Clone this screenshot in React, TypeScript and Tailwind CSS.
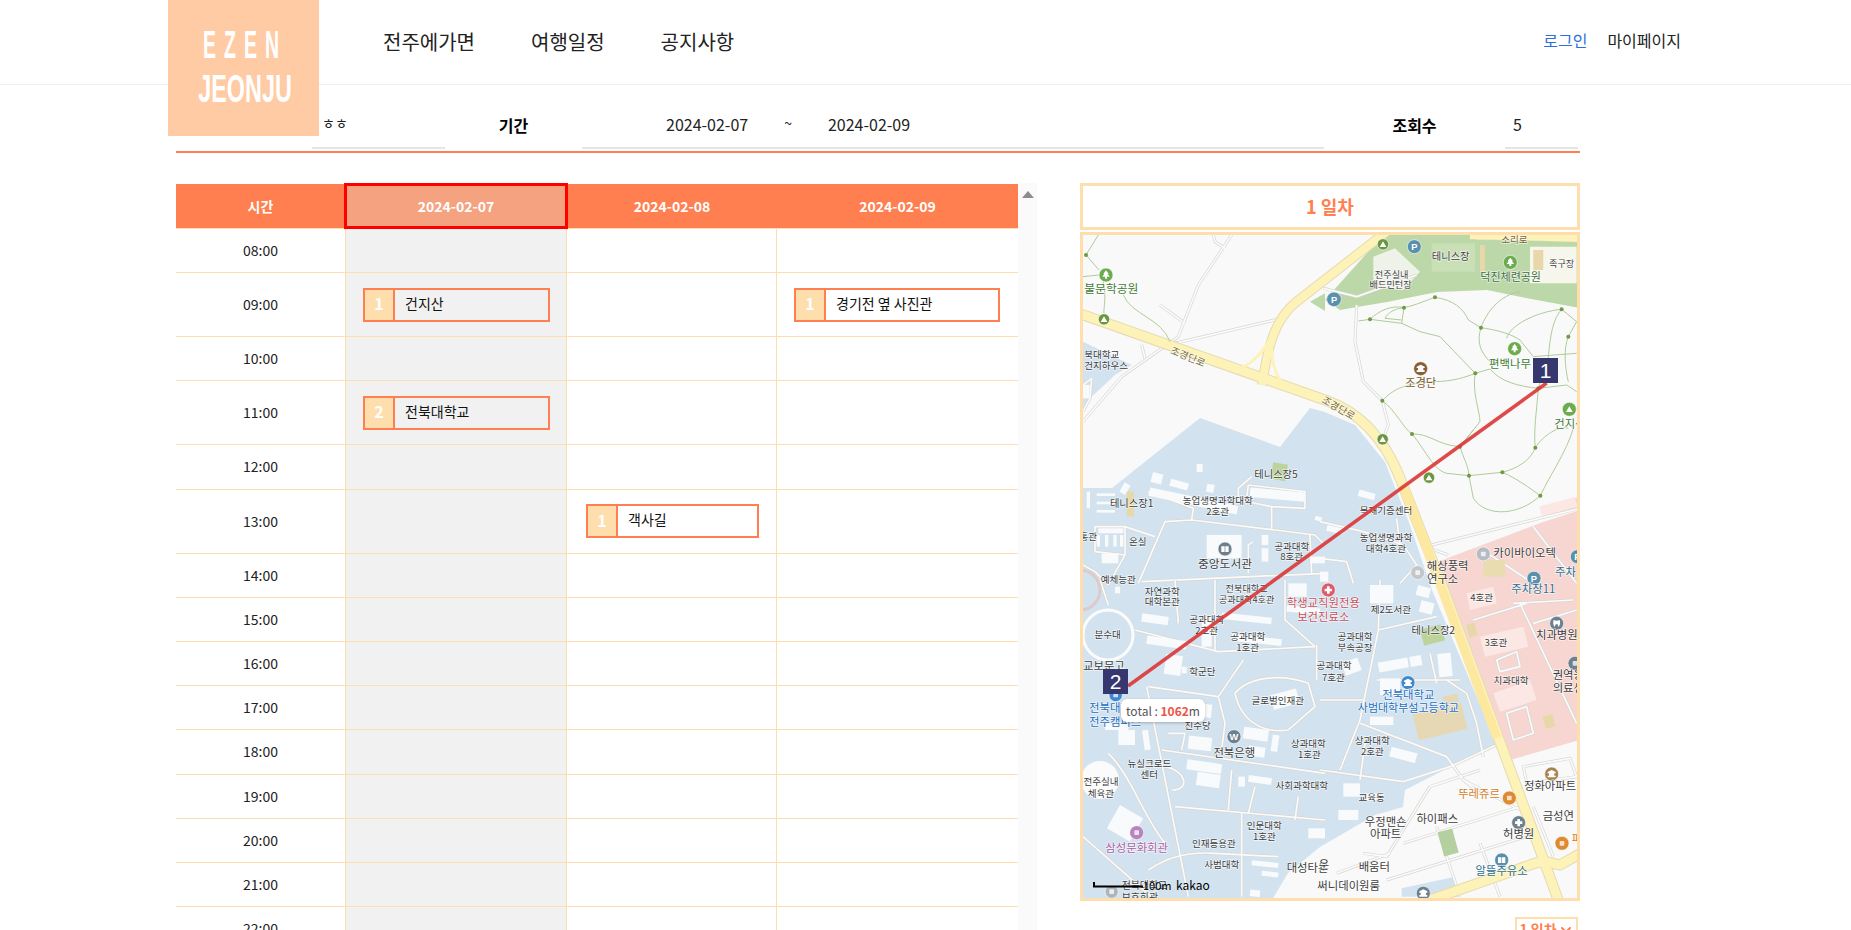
import { ChevronDown } from 'lucide-react'

type Rect = [number, number, number, number, number?, string?]
type Label = [number, number, string, number?, string?, 's' | 'e'?, number?]
type Pin = [number, number, number, string, string?]
type Poly = [string, string]

type Quad = {
  ox: number
  oy: number
  polys?: Poly[]
  roads?: string[]
  rects?: Rect[]
  trails?: string[]
  nodes?: [number, number][]
  labels?: Label[]
  pins?: Pin[]
}

const TEXT = '#3d3d3d'
const GREEN = '#3f7a35'
const BLUE = '#1f6fc0'
const TEAL = '#2f6f8f'
const ORANGE = '#d67d1f'
const RED = '#c94f5c'

// coordinates of each map quarter are in 3x units from its corner
const quads: Quad[] = [
  {
    ox: 1075,
    oy: 225,
    polys: [
      ['24,350 170,420 120,450 45,520 24,560', '#d2e3ef'],
      ['705,230 750,205 750,258', '#bcd7a8'],
    ],
    roads: [
      'M24 590 L140 455 L310 335 L370 180 L470 30',
      'M255 240 L330 295',
      'M300 355 L620 280',
      'M200 360 L210 400',
      'M24 1020 L60 1040 L100 1080',
      'M100 1080 L150 990 L150 905 L60 905 L60 980 L150 990',
      'M150 905 L240 935',
      'M190 1075 L270 890 L350 885 L600 915 L720 930 L750 960',
      'M350 885 L355 850 L220 800',
      'M490 825 L490 790 L530 755',
      'M490 825 L590 845 L690 850 L690 800 L520 780 L515 820',
      'M590 845 L590 915',
      'M200 1070 L750 1045',
      'M520 1045 L520 960 L535 950',
      'M710 1045 L705 930',
      'M415 30 L420 50 L450 70',
      'M24 480 L50 460 L45 520 L24 560',
    ],
    rects: [
      [230, 745, 32, 30, 15],
      [285, 768, 55, 22, 15],
      [395, 778, 22, 24, 10],
      [365, 717, 18, 24],
      [140, 775, 20, 32, 30],
      [220, 815, 270, 26, 12],
      [35, 800, 10, 50],
      [65, 805, 55, 8],
      [65, 830, 55, 8],
      [65, 855, 55, 8],
      [525, 795, 165, 28, 5],
      [395, 930, 105, 70],
      [70, 910, 75, 15],
      [65, 930, 10, 35],
      [90, 930, 10, 35],
      [115, 930, 10, 35],
      [135, 930, 10, 35],
      [80, 985, 50, 30],
      [560, 930, 20, 30],
      [560, 970, 20, 40],
      [705, 995, 45, 20],
      [720, 875, 20, 12, 15],
      [24, 480, 20, 40],
      [155, 800, 22, 75, 0, '#e8d7a8'],
      [590, 715, 45, 50, 10, '#bcd49c'],
    ],
    trails: [
      'M70 30 L33 90 L72 135',
      'M24 155 L72 150',
      'M85 170 C95 220 85 250 87 265',
      'M145 210 C170 270 260 280 285 350',
    ],
    nodes: [[33, 90]],
    labels: [
      [28, 205, '불문학공원', 32, GREEN, 's'],
      [28, 398, '북대학교', 26, TEXT, 's'],
      [28, 433, '건지하우스', 26, TEXT, 's'],
      [335, 405, '조경단로', 27, '#75683a', undefined, 22],
      [603, 758, '테니스장5', 28],
      [170, 847, '테니스장1', 28],
      [428, 838, '농업생명과학대학', 26],
      [428, 871, '2호관', 26],
      [188, 960, '온실', 26],
      [450, 1030, '중앙도서관', 32],
      [650, 975, '공과대학', 26],
      [650, 1005, '8호관', 26],
      [40, 945, '홍관', 26],
      [130, 1073, '예체능관', 26],
    ],
    pins: [
      [93, 150, 21, '#6cab4e', 'tree'],
      [87, 283, 17, '#6b9640', 'mt'],
      [450, 972, 21, '#6c808f', 'book'],
    ],
  },
  {
    ox: 1320,
    oy: 225,
    polys: [
      ['670,850 780,815 780,850 670,880', '#f7d6d1'],
      ['160,95 225,70 300,140 250,195 160,185', '#eef2e8'],
      ['630,65 770,65 770,175 630,175', '#f6f6ec'],
    ],
    roads: [
      'M110 240 L105 350 L130 470 L187 527 L205 600 L190 640',
      'M335 960 L780 850',
      'M330 970 L385 990',
      'M0 890 L130 920 L250 960 L290 1020 L240 1075',
      'M0 1000 L80 1010 L100 1075',
      'M480 970 L640 1075',
      'M640 905 L770 1075',
      'M240 960 L230 880',
      'M10 190 L110 215 L290 150',
    ],
    rects: [
      [115, 800, 50, 20, 15],
      [20, 905, 50, 18, 12],
      [0, 1040, 25, 30],
      [480, 60, 15, 80, 0, '#e8d7a8'],
      [335, 55, 130, 85, 0, '#c9dfb6'],
      [640, 75, 30, 60, 0, '#e8d7a8'],
      [490, 1005, 65, 50, 0, '#e8dcb0'],
      [660, 830, 110, 30, -15, '#fbe8e5'],
    ],
    trails: [
      'M115 288 L150 283 L245 295 L300 320 L360 335 L466 445',
      'M150 283 C180 255 215 240 252 248 C290 240 320 225 345 217 C400 225 430 250 445 285 L483 308 C530 315 570 325 600 345 L640 395',
      'M195 280 C205 260 230 250 252 248 L245 295',
      'M195 280 L245 285',
      'M483 308 C470 350 480 380 510 410',
      'M466 445 L510 432 C540 470 600 485 655 490',
      'M187 527 C230 480 280 475 340 470 C400 470 440 455 466 445',
      'M187 527 C230 560 250 610 276 627 C330 625 350 660 420 665 L460 615',
      'M466 445 C455 500 480 560 480 590 L420 665 C430 700 445 720 447 752',
      'M276 627 C320 680 340 735 380 745 L447 752 L547 742 C590 730 630 710 646 668 C640 620 650 560 655 490',
      'M547 742 C590 760 630 790 661 812 C600 870 500 880 460 820 L447 752',
      'M646 668 C670 630 720 600 745 610',
      'M661 812 C690 750 740 680 760 610',
      'M483 308 C500 260 540 210 600 200',
      'M560 340 C570 300 650 260 725 253 C700 280 690 330 685 400 L655 490',
      'M725 253 L770 290 L745 335 C730 370 735 430 745 470',
      'M655 490 L740 480 L770 500',
      'M640 395 L770 385',
    ],
    nodes: [
      [345, 217],
      [252, 248],
      [150, 283],
      [483, 308],
      [466, 445],
      [187, 527],
      [276, 627],
      [420, 665],
      [447, 752],
      [547, 742],
      [646, 668],
      [661, 812],
      [725, 253],
      [745, 335],
      [655, 490],
    ],
    labels: [
      [583, 53, '소리로', 26, '#75683a'],
      [392, 105, '테니스장', 28],
      [725, 127, '족구장', 25],
      [215, 158, '전주실내', 25],
      [212, 190, '배드민턴장', 25],
      [572, 168, '덕진체련공원', 30, '#3f6f3f'],
      [570, 428, '편백나무', 31, GREEN],
      [302, 487, '조경단', 31, '#7a5a2f'],
      [703, 610, '건지산', 31, GREEN, 's'],
      [50, 558, '조경단로', 27, '#75683a', undefined, 30],
      [198, 868, '목재기증센터', 26],
      [198, 948, '농업생명과학', 26],
      [198, 982, '대학4호관', 26],
      [520, 996, '카이바이오텍', 31, TEXT, 's'],
      [383, 1035, '해상풍력', 31],
      [368, 1075, '연구소', 31],
      [705, 1052, '주차', 31, TEAL, 's'],
    ],
    pins: [
      [189, 58, 17, '#6b9640', 'mt'],
      [283, 65, 21, '#5b90ad', 'P'],
      [42, 223, 22, '#5b90ad', 'P'],
      [571, 112, 21, '#6cab4e', 'tree'],
      [584, 371, 21, '#6cab4e', 'tree'],
      [302, 431, 21, '#8a5f35', 'temple'],
      [188, 643, 17, '#6b9640', 'mt'],
      [327, 758, 17, '#6b9640', 'mt'],
      [748, 553, 21, '#6cab4e', 'mt'],
      [490, 987, 21, '#b5bcc4', 'sq'],
      [293, 1043, 21, '#c2c7cc', 'sq'],
      [642, 1060, 21, '#5b90ad', 'P'],
      [772, 995, 21, '#5b90ad', 'P'],
    ],
  },
  {
    ox: 1075,
    oy: 580,
    polys: [['24,760 200,950 24,950', '#d2e3ef']],
    roads: [
      'M75 0 L100 75',
      'M180 150 L430 215 L720 200',
      'M420 0 L420 215',
      'M220 320 L430 350',
      'M430 350 L505 240',
      'M430 350 L450 430 L440 510',
      'M480 340 C520 290 620 280 700 310 L720 380 L640 450 C570 460 500 430 480 340 Z',
      'M260 510 L750 580',
      'M300 680 L750 720',
      'M215 320 L340 950',
      'M500 700 L500 950',
      'M670 650 L660 720',
      'M540 620 L520 700',
      'M470 570 L460 690',
      'M300 0 L310 130',
      'M630 0 L630 120 L720 200',
      'M220 870 C280 830 340 815 420 820 L610 830',
      'M24 770 L240 960',
      'M100 520 C170 590 200 700 270 790',
      'M280 460 L330 460 L320 510',
      'M270 560 C330 570 350 630 290 630',
      'M725 195 L725 300',
    ],
    rects: [
      [120, 20, 15, 20],
      [200, 105, 80, 25, 8],
      [215, 175, 120, 25, 8],
      [270, 225, 50, 60, 8],
      [320, 260, 15, 20],
      [380, 110, 30, 90],
      [440, 105, 150, 20, 6],
      [470, 170, 150, 20, 6],
      [640, 10, 55, 40],
      [635, 80, 100, 20, 6],
      [330, 370, 80, 40, 6],
      [280, 375, 20, 40],
      [340, 470, 70, 40, 6],
      [505, 445, 75, 35, 8],
      [590, 465, 20, 50, 8],
      [520, 500, 50, 30, 8],
      [335, 545, 105, 30, 8],
      [365, 580, 70, 40, 8],
      [490, 590, 20, 30],
      [520, 590, 70, 20, 8],
      [590, 335, 80, 45, -15],
      [205, 450, 18, 60, -8],
      [90, 430, 70, 20],
      [110, 690, 80, 80, 30],
      [700, 745, 50, 30],
      [530, 845, 80, 15, 6],
      [560, 875, 50, 15, 6],
      [525, 930, 30, 20, 6],
      [130, 450, 50, 45],
    ],
    labels: [
      [262, 45, '자연과학', 26],
      [262, 76, '대학본관', 26],
      [515, 35, '전북대학교', 25],
      [515, 68, '공과대학4호관', 25],
      [745, 82, '학생교직원전용', 31, RED],
      [745, 122, '보건진료소', 31, RED],
      [98, 175, '분수대', 26],
      [395, 130, '공과대학', 26],
      [395, 163, '2호관', 26],
      [518, 181, '공과대학', 26],
      [518, 214, '1호관', 26],
      [24, 270, '교보문고', 31, TEXT, 's'],
      [382, 285, '학군단', 26],
      [608, 371, '글로벌인재관', 26],
      [42, 397, '전북대학교', 31, BLUE, 's'],
      [42, 439, '전주캠퍼스', 31, BLUE, 's'],
      [368, 447, '진수당', 26],
      [478, 530, '전북은행', 31],
      [700, 502, '상과대학', 26],
      [703, 535, '1호관', 26],
      [223, 560, '뉴실크로드', 26],
      [223, 593, '센터', 26],
      [78, 616, '전주실내', 26],
      [78, 651, '체육관', 26],
      [680, 628, '사회과학대학', 26],
      [568, 747, '인문대학', 26],
      [568, 781, '1호관', 26],
      [185, 817, '삼성문화회관', 31, '#ad5fa6'],
      [417, 802, '인재등용관', 26],
      [440, 863, '사범대학', 26],
      [635, 877, '대성타운', 31, TEXT, 's'],
      [140, 926, '전북대학교', 27, TEXT, 's'],
      [140, 962, '보호회관', 27, TEXT, 's'],
    ],
    pins: [
      [122, 345, 20, '#3f87cf', 'sq'],
      [477, 470, 21, '#6c808f', 'W'],
      [185, 758, 21, '#b884bd', 'sq'],
      [760, 30, 21, '#dc5c6c', 'plus'],
      [110, 935, 20, '#aeb6bd', 'sq'],
    ],
  },
  {
    ox: 1320,
    oy: 580,
    polys: [
      ['245,925 405,890 420,950 245,950', '#d2e3ef'],
      ['440,40 520,20 530,70 450,90', '#fbe8e5'],
      ['480,170 610,140 625,200 495,230', '#fbe8e5'],
      ['520,340 630,300 650,360 540,395', '#fbe8e5'],
    ],
    roads: [
      'M180 0 L175 150 L120 420 L60 570',
      'M175 150 L350 110',
      'M0 570 L250 605 L390 560 L540 490',
      'M120 430 L380 530 L430 600 L480 640',
      'M380 300 L440 340 L470 430 L490 530',
      'M170 300 L420 300',
      'M330 220 L350 310',
      'M330 620 L200 830 L130 820',
      'M330 620 L480 570',
      'M430 600 L600 690',
      'M250 790 L600 680',
      'M200 900 L650 760',
      'M350 740 L420 950',
      'M480 790 L540 950',
      'M600 70 L770 430',
      'M580 70 L760 60',
      'M640 130 L770 90',
      'M460 120 L620 70',
      'M530 240 L590 215 L600 260 L540 275 Z',
      'M560 400 L620 380 L640 460 L580 480 Z',
      'M610 560 L750 535 L770 590 L620 610 Z',
      'M640 680 L700 830',
      'M0 360 L130 360',
      'M135 490 L120 600',
      'M50 880 L210 820',
    ],
    rects: [
      [175, 240, 90, 30, -10],
      [270, 228, 35, 30, -10],
      [355, 220, 40, 70, -5],
      [305, 140, 65, 50, -15, '#bcd49c'],
      [290, 20, 40, 30, 15],
      [300, 65, 40, 35, 15],
      [150, 15, 70, 55],
      [70, 610, 50, 40],
      [55, 690, 60, 30],
      [140, 640, 30, 20],
      [180, 295, 60, 50],
      [150, 410, 70, 25],
      [210, 510, 80, 30, 15],
      [70, 240, 50, 40, -20],
      [285, 385, 150, 80, -13, '#e6d8b5'],
      [370, 345, 45, 25, -13, '#e6d8b5'],
      [362, 750, 45, 75, -15, '#b5d0a0'],
      [443, 130, 25, 40, -15, '#e6d8a8'],
      [672, 405, 30, 38, -15, '#e6d8a8'],
    ],
    labels: [
      [640, 40, '주차장11', 31, TEAL],
      [485, 64, '4호관', 26],
      [213, 98, '제2도서관', 26],
      [340, 163, '테니스장2', 28],
      [648, 178, '치과병원', 31, TEXT, 's'],
      [105, 181, '공과대학', 26],
      [105, 213, '부속공장', 26],
      [528, 198, '3호관', 26],
      [42, 268, '공과대학', 26],
      [40, 304, '7호관', 26],
      [698, 296, '권역응', 31, TEXT, 's'],
      [698, 337, '의료센', 31, TEXT, 's'],
      [573, 311, '치과대학', 26],
      [265, 356, '전북대학교', 31, BLUE],
      [265, 397, '사범대학부설고등학교', 30, BLUE],
      [157, 492, '상과대학', 26],
      [157, 526, '2호관', 26],
      [612, 629, '정화아파트', 31, TEXT, 's'],
      [540, 654, '뚜레쥬르', 31, ORANGE, 'e'],
      [155, 663, '교육동', 26],
      [197, 737, '우정맨숀', 31],
      [197, 773, '아파트', 31],
      [352, 728, '하이패스', 31],
      [668, 721, '금성연', 31, TEXT, 's'],
      [596, 773, '허병원', 31],
      [755, 790, '파', 31, ORANGE, 's'],
      [12, 866, '운', 31],
      [163, 874, '배움터', 31],
      [180, 929, '써니데이원룸', 31, TEXT, 'e'],
      [545, 885, '알뜰주유소', 31, TEAL],
    ],
    pins: [
      [264, 308, 21, '#3f87cf', 'temple'],
      [710, 130, 21, '#6c808f', 'tooth'],
      [765, 250, 21, '#6c808f', 'sq'],
      [695, 582, 21, '#a88450', 'temple'],
      [568, 654, 21, '#dd8a30', 'sq'],
      [596, 728, 21, '#6c808f', 'plus'],
      [726, 790, 21, '#dd8a30', 'sq'],
      [545, 840, 21, '#5b90ad', 'book'],
      [310, 940, 21, '#6c808f', 'temple'],
    ],
  },
]

function PinGlyph({ kind }: { kind?: string }) {
  switch (kind) {
    case 'tree':
      return <path d="M0 -14 L8 -4 L5 -4 L11 5 L3 5 L3 11 L-3 11 L-3 5 L-11 5 L-5 -4 L-8 -4 Z" fill="#fff" />
    case 'mt':
      return <path d="M0 -9 L10 8 L-10 8 Z" fill="#fff" />
    case 'plus':
      return <path d="M-4 -11 H4 V-4 H11 V4 H4 V11 H-4 V4 H-11 V-4 H-4 Z" fill="#fff" />
    case 'sq':
      return <rect x="-7" y="-7" width="14" height="14" rx="2" fill="#fff" fillOpacity={0.75} />
    case 'book':
      return <path d="M-11 -8 H-1 V9 H-11 Z M1 -8 H11 V9 H1 Z" fill="#fff" />
    case 'temple':
      return <path d="M-12 -6 L0 -12 L12 -6 V-2 H8 V5 H12 V10 H-12 V5 H-8 V-2 H-12 Z" fill="#fff" />
    case 'tooth':
      return <path d="M-9 -10 Q0 -6 9 -10 Q13 0 6 11 L3 3 H-3 L-6 11 Q-13 0 -9 -10 Z" fill="#fff" />
    case 'P':
    case 'W':
      return (
        <text y="10" textAnchor="middle" fontSize="28" fontWeight="700" fill="#fff" fontFamily="Liberation Sans, sans-serif">
          {kind}
        </text>
      )
    default:
      return null
  }
}

function MapView() {
  return (
    <div className="relative h-[663px] w-[494px] overflow-hidden bg-[#f9f9f9]">
      <svg viewBox="1083 235 494 663" className="block h-full w-full">
        {/* land use */}
        <polygon
          fill="#d2e3ef"
          points="1083,488 1112,488 1200,418 1280,447 1310,408 1325,412 1355,425 1385,462 1410,525 1432,590 1497,745 1450,767 1405,790 1403,807 1375,815 1320,847 1288,873 1272,900 1083,900"
        />
        <polygon fill="#f7d6d1" points="1437,562 1543,522 1580,510 1580,740 1510,760" />
        <polygon
          fill="#bcd7a8"
          points="1383,235 1477,235 1477,240 1580,240 1580,308 1526,298 1487,290 1437,292 1387,302 1357,307 1340,310 1325,300"
        />
        {quads.map((q) => (
          <g key={`p${q.ox}${q.oy}`} transform={`translate(${q.ox} ${q.oy}) scale(0.3333)`}>
            {q.polys?.map(([points, fill]) => <polygon key={points} points={points} fill={fill} />)}
          </g>
        ))}

        {/* small roads */}
        {quads.map((q) => (
          <g key={`r${q.ox}${q.oy}`} transform={`translate(${q.ox} ${q.oy}) scale(0.3333)`} fill="none" strokeLinejoin="round">
            {q.roads?.map((d) => <path key={d} d={d} stroke="#d6d6d4" strokeWidth={9} />)}
            {q.roads?.map((d) => <path key={d} d={d} stroke="#fbfbfb" strokeWidth={5} />)}
          </g>
        ))}

        {/* fountain and gym */}
        <circle cx="1108" cy="635" r="25" fill="#d2e3ef" stroke="#fbfbfb" strokeWidth="3" />
        <circle cx="1100" cy="780" r="19" fill="#fbfbfb" />
        <circle cx="1080" cy="590" r="20" fill="none" stroke="#dccbc8" strokeWidth="3" />

        {/* main roads */}
        <g fill="none" strokeLinejoin="round">
          <path d="M1075 312 L1325 400 C1360 412 1385 440 1400 478 L1440 580 L1540 850 L1560 905" stroke="#e5dbb0" strokeWidth="11" />
          <path d="M1262 385 C1268 345 1275 320 1295 303 L1395 225" stroke="#e5dbb0" strokeWidth="10" />
          <path d="M1430 900 L1530 865 C1540 860 1550 862 1560 865 L1590 848" stroke="#e5dbb0" strokeWidth="11" />
          <path d="M1470 235 L1590 238" stroke="#e5dbb0" strokeWidth="9" />
          <path d="M1235 369 C1250 368 1265 350 1272 335" stroke="#fdf2b8" strokeWidth="3" />
          <path d="M1272 350 C1272 370 1280 385 1295 392" stroke="#fdf2b8" strokeWidth="3" />
          <path d="M1075 312 L1325 400 C1360 412 1385 440 1400 478 L1440 580 L1540 850 L1560 905" stroke="#fdf2b8" strokeWidth="9" />
          <path d="M1262 385 C1268 345 1275 320 1295 303 L1395 225" stroke="#fdf2b8" strokeWidth="8" />
          <path d="M1430 900 L1530 865 C1540 860 1550 862 1560 865 L1590 848" stroke="#fdf2b8" strokeWidth="9" />
          <path d="M1470 235 L1590 238" stroke="#fdf2b8" strokeWidth="8" />
          <path d="M1403 484 L1497 738" stroke="#fde8a0" strokeWidth="9" />
        </g>

        {/* buildings */}
        {quads.map((q) => (
          <g key={`b${q.ox}${q.oy}`} transform={`translate(${q.ox} ${q.oy}) scale(0.3333)`}>
            {q.rects?.map(([x, y, w, h, rot, fill]) => (
              <rect
                key={`${x}-${y}`}
                x={x}
                y={y}
                width={w}
                height={h}
                fill={fill ?? '#f8fafb'}
                transform={rot ? `rotate(${rot} ${x + w / 2} ${y + h / 2})` : undefined}
              />
            ))}
            {q.trails?.map((d) => <path key={d} d={d} fill="none" stroke="#aecb9a" strokeWidth={3} />)}
            {q.nodes?.map(([x, y]) => <circle key={`${x}-${y}`} cx={x} cy={y} r={6} fill="#6f9a40" />)}
          </g>
        ))}

        {/* pins and names */}
        {quads.map((q) => (
          <g key={`l${q.ox}${q.oy}`} transform={`translate(${q.ox} ${q.oy}) scale(0.3333)`} fontFamily="Noto Sans CJK KR, sans-serif">
            {q.pins?.map(([x, y, r, fill, kind]) => (
              <g key={`${x}-${y}`} transform={`translate(${x} ${y})`}>
                <circle r={r} fill={fill} stroke="#fff" strokeOpacity={0.6} strokeWidth={3} />
                <PinGlyph kind={kind} />
              </g>
            ))}
            {q.labels?.map(([x, y, text, size, color, anchor, rot]) => (
              <text
                key={`${x}-${y}`}
                x={x}
                y={y}
                fontSize={(size ?? 27) * 1.1}
                fill={color ?? TEXT}
                stroke="#fff"
                strokeOpacity={0.7}
                strokeWidth={4}
                paintOrder="stroke"
                textAnchor={anchor === 's' ? 'start' : anchor === 'e' ? 'end' : 'middle'}
                transform={rot ? `rotate(${rot} ${x} ${y})` : undefined}
              >
                {text}
              </text>
            ))}
          </g>
        ))}

        {/* route */}
        <line x1="1546.7" y1="383" x2="1128" y2="686" stroke="#db3a3a" strokeWidth="3.5" strokeOpacity="0.92" />

        {/* scale */}
        <path d="M1094 882 V886.5 H1143" fill="none" stroke="#000" strokeWidth="2" />
        <text x="1143" y="890" fontSize="11" fill="#000" fontFamily="Noto Sans CJK KR, sans-serif">
          100m
        </text>
        <text x="1176" y="890" fontSize="12" fill="#000" fontFamily="Noto Sans CJK KR, sans-serif">
          kakao
        </text>
      </svg>

      <div className="absolute left-[450px] top-[123px] flex h-[25px] w-[25px] items-center justify-center bg-[#37376f] font-['Liberation_Sans',sans-serif] text-[21px] leading-none text-white">
        1
      </div>
      <div className="absolute left-[20px] top-[434px] flex h-[25px] w-[25px] items-center justify-center bg-[#37376f] font-['Liberation_Sans',sans-serif] text-[21px] leading-none text-white">
        2
      </div>
      <div className="absolute left-[38px] top-[464px] flex h-[23px] w-[84px] items-center justify-center rounded-[6px] bg-white text-[12px] leading-none text-[#555] shadow-[0_1px_3px_rgba(0,0,0,0.25)]">
        total :&nbsp;<span className="font-bold text-[#ee5544]">1062</span>m
      </div>
    </div>
  )
}

const rows = [
  { time: '08:00' },
  { time: '09:00', tall: true, day: 0, no: 1, name: '건지산' },
  { time: '10:00' },
  { time: '11:00', tall: true, day: 0, no: 2, name: '전북대학교' },
  { time: '12:00' },
  { time: '13:00', tall: true, day: 1, no: 1, name: '객사길' },
  { time: '14:00' },
  { time: '15:00' },
  { time: '16:00' },
  { time: '17:00' },
  { time: '18:00' },
  { time: '19:00' },
  { time: '20:00' },
  { time: '21:00' },
  { time: '22:00' },
  { time: '23:00' },
]

function Spot({ no, name, className }: { no: number; name: string; className: string }) {
  return (
    <div className={`flex h-[34px] flex-1 items-stretch border-2 border-[#ff7f50] text-[14px] text-[#111] ${className}`}>
      <div className="flex w-[30px] items-center justify-center border-r-2 border-[#ff7f50] bg-[#ffdead] pb-[3px] text-[16px] font-bold text-white">{no}</div>
      <div className="flex items-center pb-[3px] pl-[10px]">{name}</div>
    </div>
  )
}

export default function App() {
  return (
    <div className="h-[930px] overflow-hidden bg-white font-['Noto_Sans_CJK_KR','Noto_Sans',sans-serif] text-[#222]">
      {/* Header */}
      <header className="flex h-[85px] border-b border-[#e9eef2] pl-[168px]">
        <a className="z-10 flex h-[136px] w-[151px] shrink-0 flex-col items-center bg-[#ffcba4] pl-[3px] pt-[23px] font-['Liberation_Sans',sans-serif] text-[39px] font-bold leading-[43px] text-white">
          <span className="scale-x-[0.5] tracking-[16px]">EZEN</span>
          <span className="scale-x-[0.6] whitespace-nowrap pt-[1px] tracking-[0px]">JEONJU</span>
        </a>
        <nav className="ml-[64px] flex gap-[56px] pt-[27px] text-[20px] leading-[30px] text-[#222]">
          <a>전주에가면</a>
          <a>여행일정</a>
          <a>공지사항</a>
        </nav>
        <div className="ml-[809px] flex gap-[20px] pt-[28px] text-[16px] leading-[24px]">
          <a className="text-[#2a6fdb]">로그인</a>
          <a>마이페이지</a>
        </div>
      </header>

      <main className="ml-[176px] w-[1404px]">
        {/* Trip info */}
        <div className="flex h-[68px] items-stretch border-b-2 border-[#ff7f50] pb-[2px] text-[16px]">
          <div className="ml-[136px] flex w-[133px] items-center border-b-2 border-[#e5e5e5] pl-[10px] pt-[15px] text-[14px]">ㅎㅎ</div>
          <div className="flex w-[137px] items-center justify-center pt-[15px] font-bold text-black">기간</div>
          <div className="flex w-[742px] items-center border-b-2 border-[#e5e5e5] pl-[84px] pt-[15px]">
            <span>2024-02-07</span>
            <span className="ml-[36px] text-[14px]">~</span>
            <span className="ml-[36px]">2024-02-09</span>
          </div>
          <div className="flex w-[181px] items-center justify-center pt-[15px] font-bold text-black">조회수</div>
          <div className="flex w-[73px] items-center border-b-2 border-[#e5e5e5] pl-[8px] pt-[15px]">5</div>
        </div>

        <div className="mt-[30px] flex">
          {/* Schedule */}
          <div className="flex w-[861px]">
            <div className="w-[842px] pt-[1px]">
              <div className="grid h-[45px] grid-cols-[169px_222px_210px_241px] border-b border-[#ffdead] bg-[#ff7f50] text-[14px] font-bold text-white">
                <div className="flex items-center justify-center">시간</div>
                <div className="relative z-10 -mx-px -my-px flex items-center justify-center border-[3px] border-[#ff0000] bg-[#f5a280]">2024-02-07</div>
                <div className="flex items-center justify-center">2024-02-08</div>
                <div className="flex items-center justify-center">2024-02-09</div>
              </div>
              {rows.map((row) => (
                <div
                  key={row.time}
                  className={
                    row.tall
                      ? 'grid h-[64px] grid-cols-[169px_222px_210px_241px] border-b border-[#ffdead] text-[14px]'
                      : 'grid h-[44.2px] grid-cols-[169px_222px_210px_241px] border-b border-[#ffdead] text-[14px]'
                  }
                >
                  <div className="flex items-center justify-center">{row.time}</div>
                  <div className="flex items-center border-x border-[#ffdead] bg-[#f1f1f1]">
                    {row.day === 0 && <Spot no={row.no} name={row.name} className="ml-[17px] mr-[16px]" />}
                  </div>
                  <div className="flex items-center border-r border-[#ffdead]">
                    {row.day === 1 && <Spot no={row.no} name={row.name} className="ml-[19px] mr-[17px]" />}
                  </div>
                  <div className="flex items-center">
                    {row.time === '09:00' && <Spot no={1} name="경기전 옆 사진관" className="ml-[17px] mr-[18px]" />}
                  </div>
                </div>
              ))}
            </div>
            <div className="flex h-[760px] w-[19px] justify-center bg-[#fafafa] pt-[8px]">
              <div className="h-0 w-0 border-x-[6px] border-b-[7px] border-x-transparent border-b-[#8c8c8c]" />
            </div>
          </div>

          {/* Day map */}
          <div className="ml-[43px] flex w-[500px] flex-col">
            <div className="flex h-[47px] items-center justify-center border-[3px] border-[#ffdead] text-[18px] font-bold text-[#ff7f50]">1 일차</div>
            <div className="mt-[2px] border-[3px] border-[#ffdead]">
              <MapView />
            </div>
            <div className="mr-[2px] mt-[16px] flex h-[28px] w-[63px] items-start justify-center gap-[1px] self-end whitespace-nowrap border-2 border-[#ffdead] text-[14px] font-bold leading-[20px] text-[#ff7f50]">
              1 일차
              <ChevronDown size={16} strokeWidth={3} className="mt-[3px] shrink-0" />
            </div>
          </div>
        </div>
      </main>
    </div>
  )
}
